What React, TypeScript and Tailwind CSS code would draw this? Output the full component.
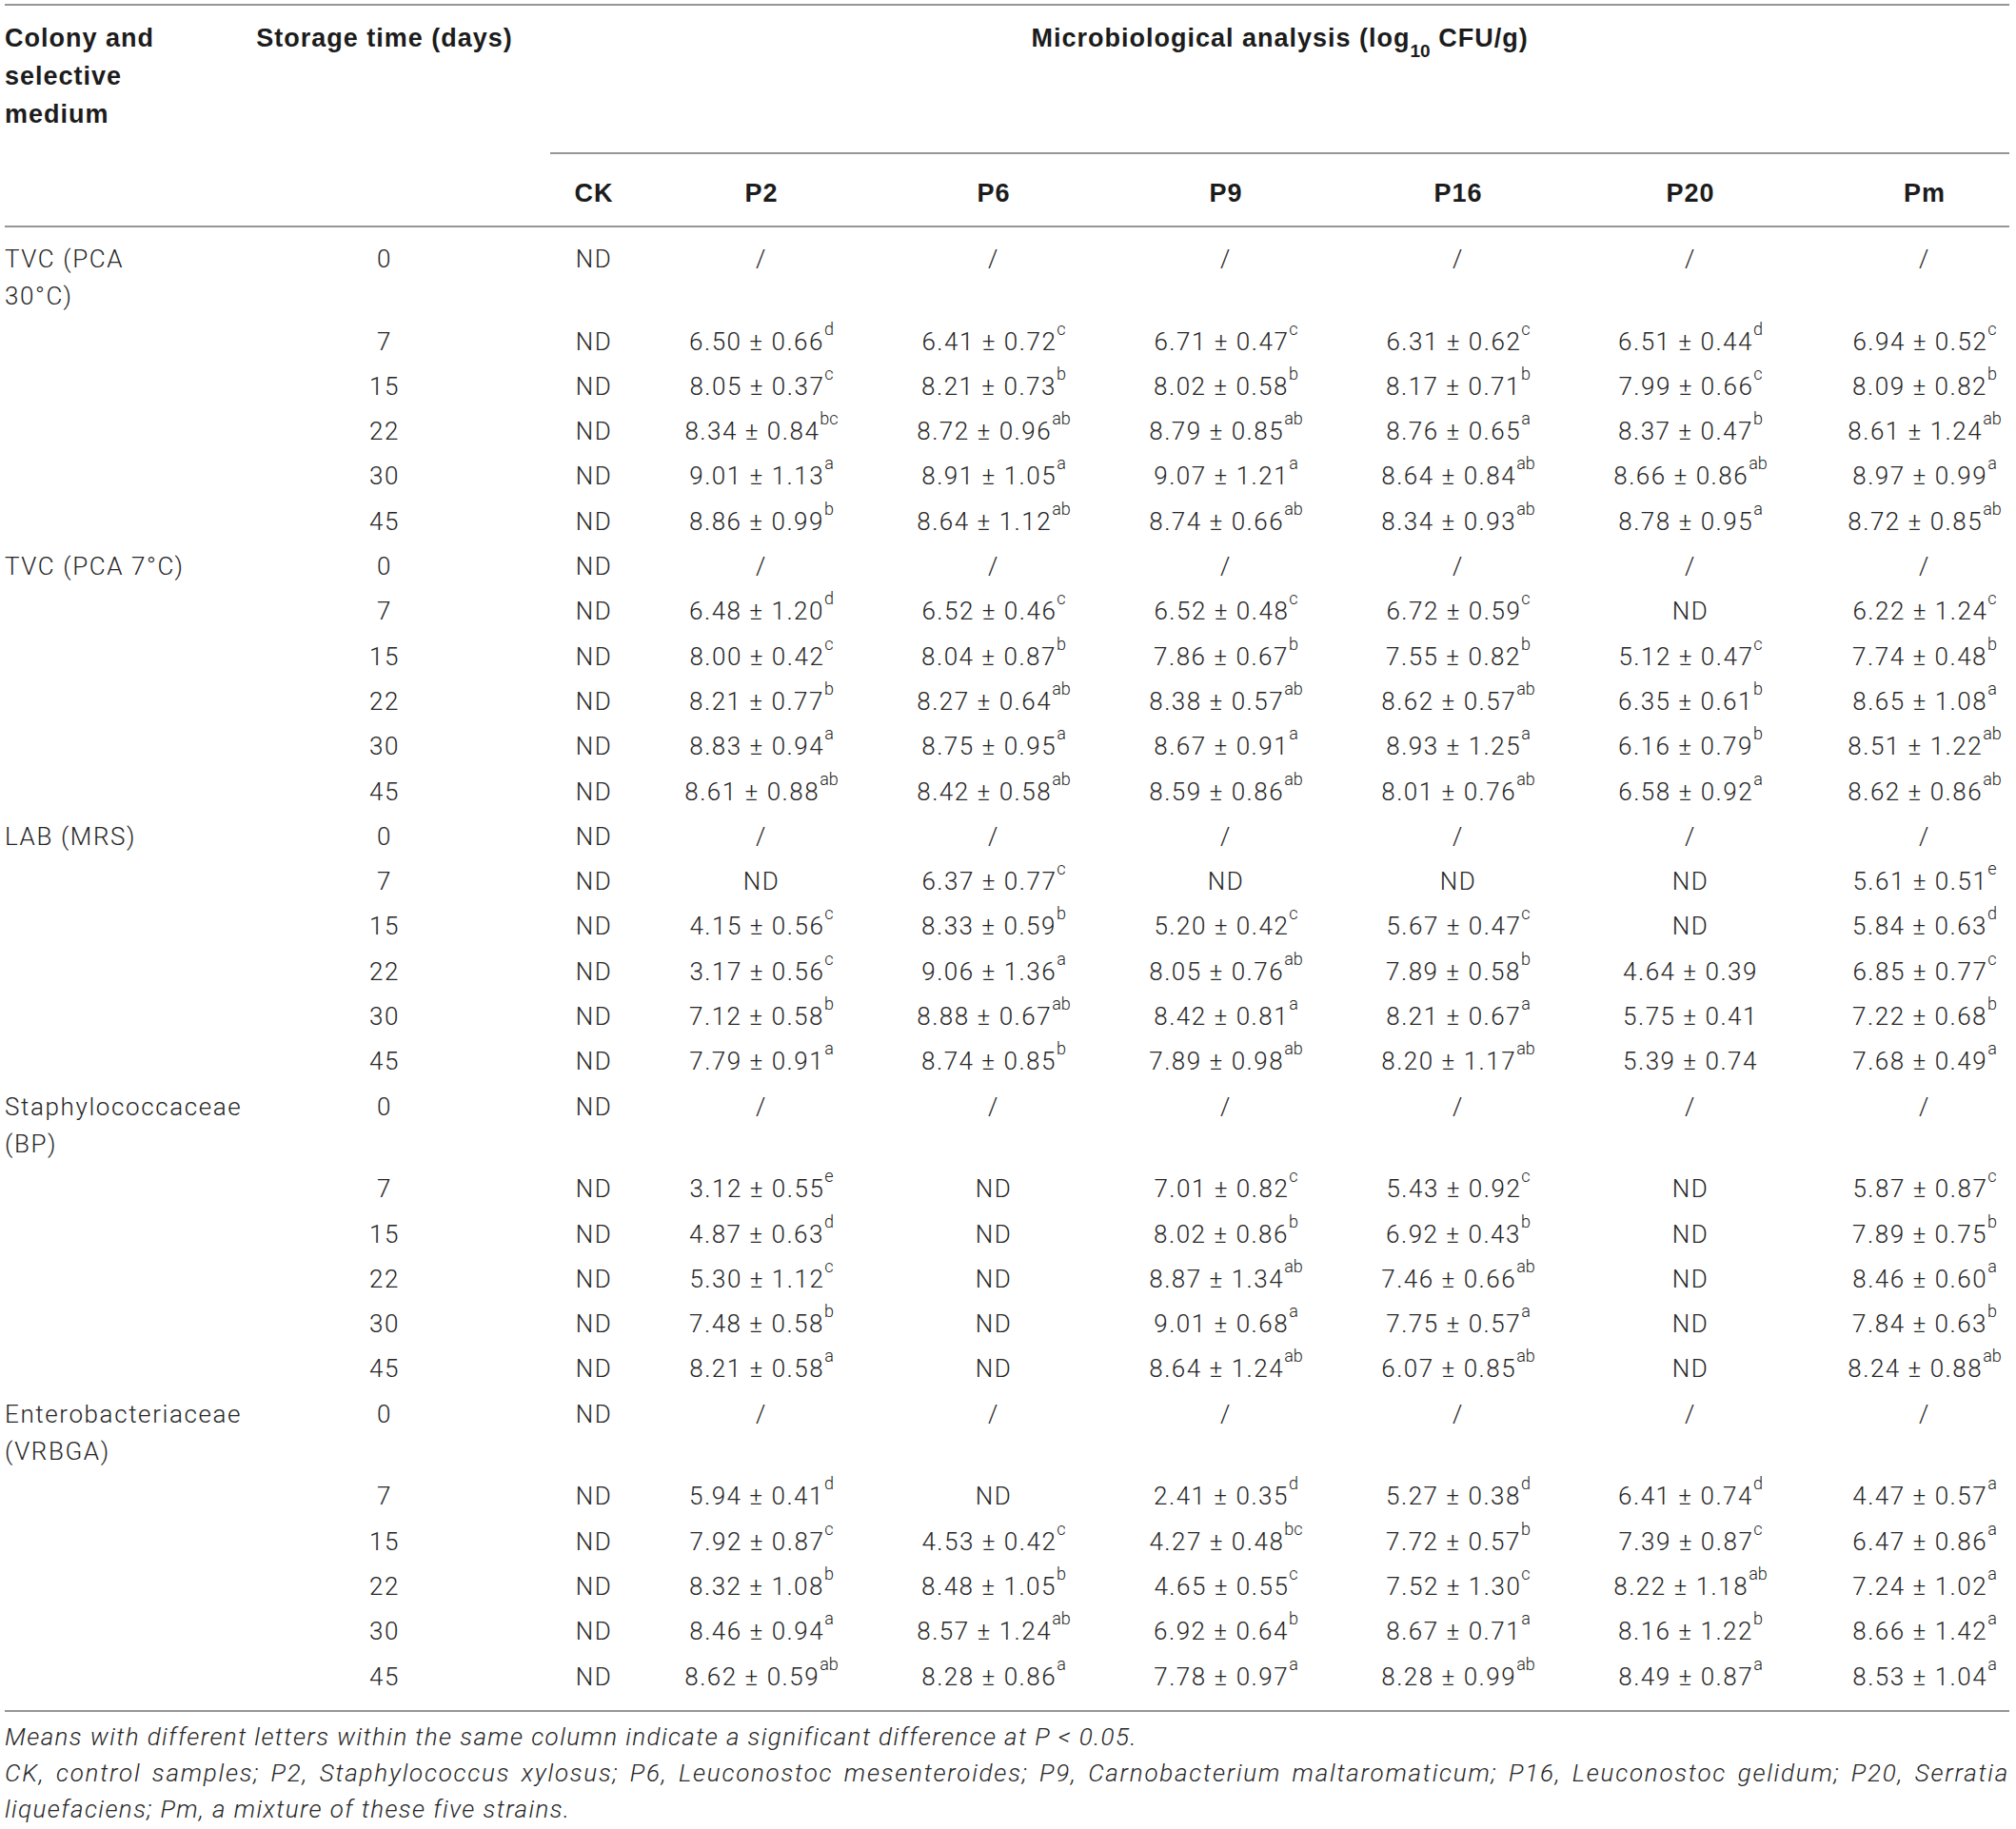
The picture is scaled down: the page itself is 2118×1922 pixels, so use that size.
import React from 'react';

type Group = {
  label: React.ReactNode;
  rows: [string, string[]][];
};

const groups: Group[] = [
  {
    label: <>TVC (PCA<br />30°C)</>,
    rows: [
      ['0', ['ND', '/', '/', '/', '/', '/', '/']],
      ['7', ['ND', '6.50 ± 0.66^d', '6.41 ± 0.72^c', '6.71 ± 0.47^c', '6.31 ± 0.62^c', '6.51 ± 0.44^d', '6.94 ± 0.52^c']],
      ['15', ['ND', '8.05 ± 0.37^c', '8.21 ± 0.73^b', '8.02 ± 0.58^b', '8.17 ± 0.71^b', '7.99 ± 0.66^c', '8.09 ± 0.82^b']],
      ['22', ['ND', '8.34 ± 0.84^bc', '8.72 ± 0.96^ab', '8.79 ± 0.85^ab', '8.76 ± 0.65^a', '8.37 ± 0.47^b', '8.61 ± 1.24^ab']],
      ['30', ['ND', '9.01 ± 1.13^a', '8.91 ± 1.05^a', '9.07 ± 1.21^a', '8.64 ± 0.84^ab', '8.66 ± 0.86^ab', '8.97 ± 0.99^a']],
      ['45', ['ND', '8.86 ± 0.99^b', '8.64 ± 1.12^ab', '8.74 ± 0.66^ab', '8.34 ± 0.93^ab', '8.78 ± 0.95^a', '8.72 ± 0.85^ab']],
    ],
  },
  {
    label: 'TVC (PCA 7°C)',
    rows: [
      ['0', ['ND', '/', '/', '/', '/', '/', '/']],
      ['7', ['ND', '6.48 ± 1.20^d', '6.52 ± 0.46^c', '6.52 ± 0.48^c', '6.72 ± 0.59^c', 'ND', '6.22 ± 1.24^c']],
      ['15', ['ND', '8.00 ± 0.42^c', '8.04 ± 0.87^b', '7.86 ± 0.67^b', '7.55 ± 0.82^b', '5.12 ± 0.47^c', '7.74 ± 0.48^b']],
      ['22', ['ND', '8.21 ± 0.77^b', '8.27 ± 0.64^ab', '8.38 ± 0.57^ab', '8.62 ± 0.57^ab', '6.35 ± 0.61^b', '8.65 ± 1.08^a']],
      ['30', ['ND', '8.83 ± 0.94^a', '8.75 ± 0.95^a', '8.67 ± 0.91^a', '8.93 ± 1.25^a', '6.16 ± 0.79^b', '8.51 ± 1.22^ab']],
      ['45', ['ND', '8.61 ± 0.88^ab', '8.42 ± 0.58^ab', '8.59 ± 0.86^ab', '8.01 ± 0.76^ab', '6.58 ± 0.92^a', '8.62 ± 0.86^ab']],
    ],
  },
  {
    label: 'LAB (MRS)',
    rows: [
      ['0', ['ND', '/', '/', '/', '/', '/', '/']],
      ['7', ['ND', 'ND', '6.37 ± 0.77^c', 'ND', 'ND', 'ND', '5.61 ± 0.51^e']],
      ['15', ['ND', '4.15 ± 0.56^c', '8.33 ± 0.59^b', '5.20 ± 0.42^c', '5.67 ± 0.47^c', 'ND', '5.84 ± 0.63^d']],
      ['22', ['ND', '3.17 ± 0.56^c', '9.06 ± 1.36^a', '8.05 ± 0.76^ab', '7.89 ± 0.58^b', '4.64 ± 0.39', '6.85 ± 0.77^c']],
      ['30', ['ND', '7.12 ± 0.58^b', '8.88 ± 0.67^ab', '8.42 ± 0.81^a', '8.21 ± 0.67^a', '5.75 ± 0.41', '7.22 ± 0.68^b']],
      ['45', ['ND', '7.79 ± 0.91^a', '8.74 ± 0.85^b', '7.89 ± 0.98^ab', '8.20 ± 1.17^ab', '5.39 ± 0.74', '7.68 ± 0.49^a']],
    ],
  },
  {
    label: <>Staphylococcaceae<br />(BP)</>,
    rows: [
      ['0', ['ND', '/', '/', '/', '/', '/', '/']],
      ['7', ['ND', '3.12 ± 0.55^e', 'ND', '7.01 ± 0.82^c', '5.43 ± 0.92^c', 'ND', '5.87 ± 0.87^c']],
      ['15', ['ND', '4.87 ± 0.63^d', 'ND', '8.02 ± 0.86^b', '6.92 ± 0.43^b', 'ND', '7.89 ± 0.75^b']],
      ['22', ['ND', '5.30 ± 1.12^c', 'ND', '8.87 ± 1.34^ab', '7.46 ± 0.66^ab', 'ND', '8.46 ± 0.60^a']],
      ['30', ['ND', '7.48 ± 0.58^b', 'ND', '9.01 ± 0.68^a', '7.75 ± 0.57^a', 'ND', '7.84 ± 0.63^b']],
      ['45', ['ND', '8.21 ± 0.58^a', 'ND', '8.64 ± 1.24^ab', '6.07 ± 0.85^ab', 'ND', '8.24 ± 0.88^ab']],
    ],
  },
  {
    label: <>Enterobacteriaceae<br />(VRBGA)</>,
    rows: [
      ['0', ['ND', '/', '/', '/', '/', '/', '/']],
      ['7', ['ND', '5.94 ± 0.41^d', 'ND', '2.41 ± 0.35^d', '5.27 ± 0.38^d', '6.41 ± 0.74^d', '4.47 ± 0.57^a']],
      ['15', ['ND', '7.92 ± 0.87^c', '4.53 ± 0.42^c', '4.27 ± 0.48^bc', '7.72 ± 0.57^b', '7.39 ± 0.87^c', '6.47 ± 0.86^a']],
      ['22', ['ND', '8.32 ± 1.08^b', '8.48 ± 1.05^b', '4.65 ± 0.55^c', '7.52 ± 1.30^c', '8.22 ± 1.18^ab', '7.24 ± 1.02^a']],
      ['30', ['ND', '8.46 ± 0.94^a', '8.57 ± 1.24^ab', '6.92 ± 0.64^b', '8.67 ± 0.71^a', '8.16 ± 1.22^b', '8.66 ± 1.42^a']],
      ['45', ['ND', '8.62 ± 0.59^ab', '8.28 ± 0.86^a', '7.78 ± 0.97^a', '8.28 ± 0.99^ab', '8.49 ± 0.87^a', '8.53 ± 1.04^a']],
    ],
  },
];

const strains = ['CK', 'P2', 'P6', 'P9', 'P16', 'P20', 'Pm'];

// per-column padding so the centred text lands where the reference puts it
const colPad = ['pr-[8px]', '', '', '', '', '', 'pl-[35px]'];

function Value({ text }: { text: string }) {
  const [main, sup] = text.split('^');
  return (
    <>
      {main}
      {sup && <sup className="text-[18px] tracking-normal align-[7px] leading-none">{sup}</sup>}
    </>
  );
}

export default function App() {
  return (
    <div className="w-[2118px] min-h-[1922px] bg-white pl-[5px] pt-[4px] text-[#262626] font-['Roboto',sans-serif]">
      <table className="table-fixed border-collapse w-[2106px]">
        <colgroup>
          <col className="w-[257px]" />
          <col className="w-[316px]" />
          <col className="w-[100px]" />
          <col className="w-[244px]" />
          <col className="w-[244px]" />
          <col className="w-[244px]" />
          <col className="w-[244px]" />
          <col className="w-[244px]" />
          <col className="w-[213px]" />
        </colgroup>
        <thead className="font-['Liberation_Sans',Arial,sans-serif] font-bold text-[27px] tracking-[1px] text-[#1c1c1c]">
          <tr className="h-[156px]">
            <th rowSpan={2} className="border-t-2 border-b-2 border-[#969696] align-top text-left pt-[14px] leading-[40px] font-bold">
              Colony and<br />selective<br />medium
            </th>
            <th rowSpan={2} className="border-t-2 border-b-2 border-[#969696] align-top text-center pr-[32px] pt-[14px] leading-[40px] font-bold">
              Storage time (days)
            </th>
            <th colSpan={7} className="border-t-2 border-b-2 border-[#969696] align-top text-center pt-[14px] leading-[40px] font-bold">
              Microbiological analysis (log<sub className="text-[19px] tracking-normal align-[-6px] leading-none">10</sub> CFU/g)
            </th>
          </tr>
          <tr className="h-[77px]">
            {strains.map((s, i) => (
              <th key={s} className={`border-b-2 border-[#969696] text-center align-middle pt-[6px] leading-[40px] font-bold ${colPad[i]}`}>
                {s}
              </th>
            ))}
          </tr>
        </thead>
        <tbody className="font-light text-[26px] tracking-[1.5px]">
          <tr className="h-[11px]">
            <td colSpan={9} />
          </tr>
          {groups.map((g, gi) =>
            g.rows.map(([day, vals], ri) => (
              <tr key={`${gi}-${day}`}>
                <td className="align-top text-left py-[4px] leading-[39.3px] tracking-[1.6px] whitespace-nowrap">
                  {ri === 0 ? g.label : null}
                </td>
                <td className="align-top text-center pr-[32px] py-[4px] leading-[39.3px]">{day}</td>
                {vals.map((v, vi) => (
                  <td key={vi} className={`align-top text-center whitespace-nowrap py-[4px] leading-[39.3px] ${colPad[vi]}`}>
                    <Value text={v} />
                  </td>
                ))}
              </tr>
            ))
          )}
          <tr className="h-[12px] border-b-2 border-[#969696]">
            <td colSpan={9} />
          </tr>
        </tbody>
      </table>
      <div className="mt-[7px] w-[2106px] italic font-light text-[26px] leading-[38px] tracking-[1.4px] text-[#262626]">
        <div className="whitespace-nowrap">Means with different letters within the same column indicate a significant difference at P &lt; 0.05.</div>
        <div className="whitespace-nowrap tracking-[1.75px] [text-align-last:justify]">
          CK, control samples; P2, Staphylococcus xylosus; P6, Leuconostoc mesenteroides; P9, Carnobacterium maltaromaticum; P16, Leuconostoc gelidum; P20, Serratia
        </div>
        <div className="whitespace-nowrap">liquefaciens; Pm, a mixture of these five strains.</div>
      </div>
    </div>
  );
}
